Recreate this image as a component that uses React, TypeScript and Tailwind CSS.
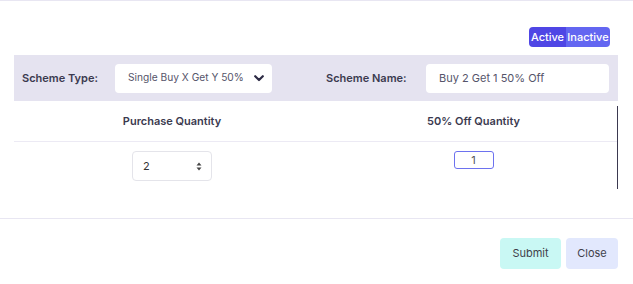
import React from "react";

export default function App() {
  return (
    <div
      className="w-[633px] h-[284px] bg-white border-t border-[#e8e6f2] overflow-hidden"
      style={{ fontFamily: "Inter, 'Noto Sans', sans-serif" }}
    >
      <div className="flex justify-end pt-[26px] pr-[23px]">
        <div className="flex h-[20px] rounded-[4px] overflow-hidden text-[11px] font-medium text-white leading-[20px]">
          <div className="bg-[#4f46e5] w-[37px] text-center">Active</div>
          <div className="bg-[#6366f1] w-[44px] text-center">Inactive</div>
        </div>
      </div>

      <div className="mt-[8px] ml-[14px] w-[604px] h-[46px] bg-[#e5e3f0] flex items-center pl-[8px] text-[11px] text-[#3b3a4f]">
        <div className="w-[93px] font-semibold">Scheme Type:</div>
        <div className="w-[157px] h-[29px] bg-white rounded-[4px] flex items-center justify-between pl-[13px] pr-[8px] text-[#55546a]">
          <span className="text-[10.2px]">Single Buy X Get Y 50%</span>
          <svg width="10" height="7" viewBox="0 0 10 7">
            <path d="M1.2 1.2 L5 5 L8.8 1.2" fill="none" stroke="#2d2b45" strokeWidth="2.2" strokeLinecap="round" strokeLinejoin="round" />
          </svg>
        </div>
        <div className="w-[54px]" />
        <div className="w-[100px] font-semibold">Scheme Name:</div>
        <div className="w-[183px] h-[29px] bg-white rounded-[4px] flex items-center pl-[13px] text-[#55546a]">
          Buy 2 Get 1 50% Off
        </div>
      </div>

      <div className="ml-[14px] w-[604px] flex">
        <div className="w-[603px]">
          <div className="grid grid-cols-[316px_287px] h-[41px] border-b border-[#eceaf4] items-center text-[11px] font-semibold text-[#3b3a4f]">
            <div className="text-center">Purchase Quantity</div>
            <div className="text-center">50% Off Quantity</div>
          </div>
          <div className="grid grid-cols-[316px_287px] pt-[9px] h-[50px] text-[11px]">
            <div className="flex justify-center">
              <div className="w-[80px] h-[30px] border border-[#e4e4ea] rounded-[4px] flex items-center justify-between pl-[10px] pr-[9px] text-[#333]">
                <span>2</span>
                <svg width="6" height="9" viewBox="0 0 6 9">
                  <path d="M3 0.5 L5.5 3.5 H0.5 Z" fill="#444" />
                  <path d="M3 8.5 L5.5 5.5 H0.5 Z" fill="#444" />
                </svg>
              </div>
            </div>
            <div className="flex justify-center">
              <div className="w-[40px] h-[18px] border border-[#6d72ef] rounded-[3px] flex items-center justify-center text-[#555] leading-none">
                1
              </div>
            </div>
          </div>
        </div>
        <div className="mt-[5px] h-[83px] w-[2px] bg-[#3b3950]" />
      </div>

      <div className="mt-[26px] border-t border-[#e8e6f2]" />

      <div className="flex justify-end gap-[5px] pt-[19px] pr-[15px] text-[11px] text-[#3f3f4a]">
        <div className="w-[61px] h-[31px] rounded-[4px] bg-[#c9f8f4] flex items-center justify-center">Submit</div>
        <div className="w-[52px] h-[31px] rounded-[4px] bg-[#e2e8fd] flex items-center justify-center">Close</div>
      </div>
    </div>
  );
}
